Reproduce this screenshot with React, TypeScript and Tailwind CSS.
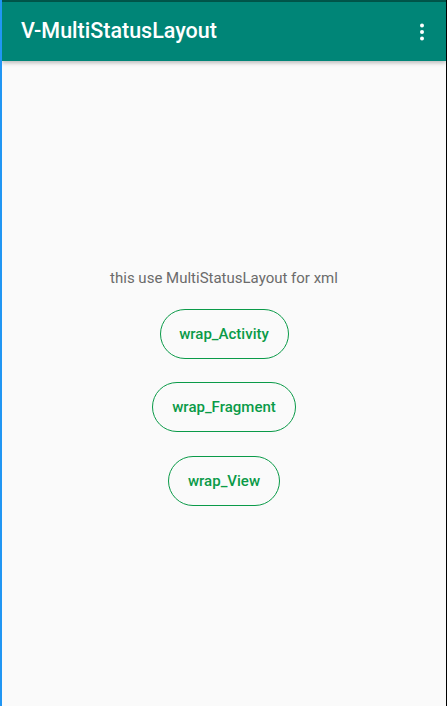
import React from "react";

export default function App() {
  const btn =
    "h-[50px] rounded-full border border-[#0a9a48] text-[#0a9a48] text-[15px] font-medium flex items-center justify-center bg-transparent";
  return (
    <div
      className="w-[447px] h-[706px] flex flex-col bg-[#fafafa] border-l-2 border-l-[#2196f3] border-r border-r-black overflow-hidden"
      style={{ fontFamily: "Roboto, 'Noto Sans', sans-serif" }}
    >
      <div className="h-[2px] bg-[#00574b] shrink-0" />
      <div className="h-[59px] bg-[#008577] flex items-center justify-between pl-[19px] pr-[21px] shadow-[0_2px_4px_rgba(0,0,0,0.25)] relative z-10 shrink-0">
        <span className="text-white text-[21.5px] font-medium">V-MultiStatusLayout</span>
        <svg width="6" height="18" viewBox="0 0 6 18">
          <circle cx="3" cy="2.5" r="2" fill="white" />
          <circle cx="3" cy="9" r="2" fill="white" />
          <circle cx="3" cy="15.5" r="2" fill="white" />
        </svg>
      </div>
      <div className="flex-1 flex flex-col items-center pt-[208px]">
        <div className="text-[15px] text-[#6b6b6b] leading-[18px]">this use MultiStatusLayout for xml</div>
        <div className={btn + " w-[129px] mt-[22px]"}>wrap_Activity</div>
        <div className={btn + " w-[144px] mt-[23px]"}>wrap_Fragment</div>
        <div className={btn + " w-[112px] mt-[24px]"}>wrap_View</div>
      </div>
    </div>
  );
}
